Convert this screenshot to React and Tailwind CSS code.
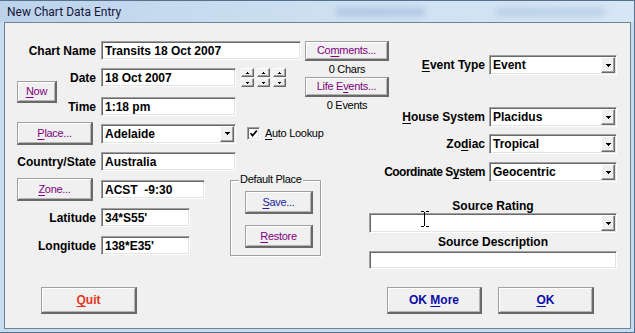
import React from 'react';

const BOLD = "font-['Liberation_Sans',Arial,sans-serif] font-bold text-[12px] leading-none whitespace-nowrap";
const REG = "font-['Liberation_Sans',Arial,sans-serif] text-[11px] tracking-[-0.3px] leading-none whitespace-nowrap";

const raised =
  'bg-[#f0f0f0] border border-t-[#a0a0a0] border-l-[#a0a0a0] border-r-2 border-b-2 border-r-[#696969] border-b-[#696969] shadow-[inset_1px_1px_0_#ffffff,inset_-1px_-1px_0_#b4b4b4]';
const raisedSmall =
  'bg-[#f0f0f0] border border-t-white border-l-white border-r-[#696969] border-b-[#696969] shadow-[inset_-1px_-1px_0_#a0a0a0]';
const sunken =
  'bg-white border border-t-[#a0a0a0] border-l-[#a0a0a0] border-r-white border-b-white shadow-[inset_1px_1px_0_#696969,inset_-1px_-1px_0_#e3e3e3]';

function U({ children }) {
  return <span className="underline underline-offset-[2px]">{children}</span>;
}

function Button({ className = '', color = 'text-[#800080]', bold, children }) {
  return (
    <div className={`${raised} ${className} flex items-center justify-center ${bold ? BOLD : REG} ${color}`}>
      <span>{children}</span>
    </div>
  );
}

function Field({ className = '', children }) {
  return (
    <div className={`${sunken} ${className} shrink-0 flex items-center pl-[3px] whitespace-pre ${BOLD} text-black`}>
      {children}
    </div>
  );
}

function Arrow() {
  return (
    <svg width="5" height="3" viewBox="0 0 5 3">
      <rect x="0" y="0" width="5" height="1" fill="#000" />
      <rect x="1" y="1" width="3" height="1" fill="#000" />
      <rect x="2" y="2" width="1" height="1" fill="#000" />
    </svg>
  );
}

function SpinArrow({ up }) {
  return (
    <svg width="3" height="2" viewBox="0 0 3 2" className={up ? 'rotate-180' : ''}>
      <rect x="0" y="0" width="3" height="1" fill="#000" />
      <rect x="1" y="1" width="1" height="1" fill="#000" />
    </svg>
  );
}

function Combo({ className = '', children }) {
  return (
    <div className={`${sunken} ${className} shrink-0 flex items-stretch p-[1px]`}>
      <div className={`flex-1 flex items-center pl-[2px] ${BOLD} text-black`}>{children}</div>
      <div className={`${raisedSmall} w-[14px] flex items-center justify-center`}>
        <Arrow />
      </div>
    </div>
  );
}

function Spins() {
  return (
    <div className="ml-[5px] flex gap-[3px]">
      {[0, 1, 2].map((i) => (
        <div key={i} className="flex flex-col gap-[1px]">
          <div className={`${raisedSmall} w-[13px] h-[9px] flex items-center justify-center`}>
            <SpinArrow up />
          </div>
          <div className={`${raisedSmall} w-[13px] h-[9px] flex items-center justify-center`}>
            <SpinArrow />
          </div>
        </div>
      ))}
    </div>
  );
}

function LabelRow({ label, className = '', children }) {
  return (
    <div className={`flex items-center h-[19px] ${className}`}>
      <div className={`w-[91px] text-right ${BOLD} text-black`}>{label}</div>
      <div className="ml-[5px]">{children}</div>
    </div>
  );
}

function ComboRow({ label, value, className = '', labelClass = '' }) {
  return (
    <div className={`flex items-center justify-end gap-[4px] ${className}`}>
      <div className={`${BOLD} ${labelClass} text-black`}>{label}</div>
      <Combo className="w-[128px] h-[20px]">{value}</Combo>
    </div>
  );
}

export default function App() {
  return (
    <div className="w-[635px] h-[333px] flex flex-col bg-[#c6dcf1] border-t border-r border-b border-[#55718c] overflow-hidden">
      {/* title bar */}
      <div className="h-[21px] flex items-center pl-[7px] bg-linear-to-r from-[#bcd3eb] via-[#cde0f2] to-[#d6e6f5]">
        <span className="font-['Roboto',sans-serif] text-[12px] text-[#15153a]">New Chart Data Entry</span>
        <div className="ml-[214px] w-[90px] h-[8px] rounded-full bg-[#a3bcdb] blur-[3px] opacity-70" />
        <div className="ml-[70px] w-[110px] h-[8px] rounded-full bg-[#a9c1de] blur-[3px] opacity-60" />
      </div>

      {/* client area */}
      <div className="flex-1 ml-[4px] mr-[3px] mb-[3px] border border-[#6f8193] bg-[#f0f0f0] flex flex-col">
        <div className="flex">
          {/* left column */}
          <div className="w-[384px] pt-[18px] flex flex-col">
            <div className="flex items-start">
              <div className="w-[296px] flex flex-col">
                <LabelRow label="Chart Name">
                  <Field className="w-[200px] h-[19px]">Transits 18 Oct 2007</Field>
                </LabelRow>
                <div className="flex items-center mt-[8px]">
                  <div className="w-[91px] flex items-center">
                    <Button className="ml-[12px] w-[40px] h-[22px]">
                      <U>N</U>ow
                    </Button>
                    <div className="flex-1 flex flex-col items-end gap-[10px]">
                      <div className={`h-[19px] flex items-center ${BOLD} text-black`}>Date</div>
                      <div className={`h-[19px] flex items-center ${BOLD} text-black`}>Time</div>
                    </div>
                  </div>
                  <div className="ml-[5px] flex flex-col gap-[10px]">
                    <div className="flex items-center">
                      <Field className="w-[135px] h-[19px]">18 Oct 2007</Field>
                      <Spins />
                    </div>
                    <Field className="w-[135px] h-[19px]">1:18 pm</Field>
                  </div>
                </div>
              </div>
              <div className="ml-[4px] w-[84px] flex flex-col">
                <Button className="h-[20px]">
                  Co<U>m</U>ments...
                </Button>
                <div className={`h-[16px] flex items-center justify-center ${REG} text-black`}>0 Chars</div>
                <Button className="h-[20px]">
                  Life E<U>v</U>ents...
                </Button>
                <div className={`h-[16px] flex items-center justify-center ${REG} text-black`}>0 Events</div>
              </div>
            </div>

            {/* place */}
            <div className="flex items-center mt-[6px] h-[23px]">
              <div className="w-[91px]">
                <Button className="ml-[12px] w-[76px] h-[23px]">
                  <U>P</U>lace...
                </Button>
              </div>
              <Combo className="ml-[5px] w-[135px] h-[20px]">Adelaide</Combo>
              <div className={`${sunken} ml-[11px] w-[13px] h-[13px] flex items-center justify-center`}>
                <svg width="9" height="9" viewBox="0 0 9 9">
                  <path d="M1.5 4.2 L3.6 6.6 L7.8 1.6" fill="none" stroke="#000" strokeWidth="1.7" />
                </svg>
              </div>
              <span className={`ml-[5px] ${REG} text-black`}>
                <U>A</U>uto Lookup
              </span>
            </div>

            <LabelRow label="Country/State" className="mt-[7px]">
              <Field className="w-[135px] h-[19px]">Australia</Field>
            </LabelRow>

            <div className="flex items-start mt-[7px]">
              <div className="w-[225px] flex flex-col">
                <div className="flex items-center h-[23px]">
                  <div className="w-[91px]">
                    <Button className="ml-[12px] w-[76px] h-[23px]">
                      <U>Z</U>one...
                    </Button>
                  </div>
                  <Field className="ml-[5px] w-[104px] h-[19px]">{'ACST  -9:30'}</Field>
                </div>
                <LabelRow label="Latitude" className="mt-[7px]">
                  <Field className="w-[89px] h-[19px]">34*S55'</Field>
                </LabelRow>
                <LabelRow label="Longitude" className="mt-[9px]">
                  <Field className="w-[89px] h-[19px]">138*E35'</Field>
                </LabelRow>
              </div>
              {/* default place group */}
              <div className="relative mt-[2px] w-[91px] border border-[#a0a0a0] shadow-[inset_1px_1px_0_#ffffff,1px_1px_0_#ffffff] pt-[10px] pl-[14px] pb-[7px] flex flex-col">
                <span className={`absolute left-[8px] top-[-7px] bg-[#f0f0f0] px-[1px] ${REG} leading-[13px] text-black`}>
                  Default Place
                </span>
                <Button className="w-[68px] h-[23px]" color="text-[#2424a2]">
                  <U>S</U>ave...
                </Button>
                <Button className="mt-[11px] w-[68px] h-[23px]">
                  <U>R</U>estore
                </Button>
              </div>
            </div>
          </div>

          {/* right column */}
          <div className="w-[240px] pr-[12px] flex flex-col">
            <ComboRow className="mt-[32px]" label={<><U>E</U>vent Type</>} value="Event" />
            <ComboRow className="mt-[32px]" label={<><U>H</U>ouse System</>} value="Placidus" />
            <ComboRow className="mt-[7px]" label={<>Zo<U>d</U>iac</>} value="Tropical" />
            <ComboRow
              className="mt-[8px]"
              labelClass="tracking-[-0.5px]"
              label={<>Coordinate S<U>y</U>stem</>}
              value="Geocentric"
            />
            <div className="-ml-[20px] w-[248px] mt-[17px] flex flex-col">
              <div className={`h-[14px] flex items-center justify-center ${BOLD} text-black`}>Source Rating</div>
              <div className="relative">
                <Combo className="w-[248px] h-[20px]" />
                <svg width="8" height="16" viewBox="0 0 8 16" className="absolute left-[52px] top-[-2px]">
                  <path d="M0 0.5h3M5 0.5h3M3.5 1v14M0 15.5h3M5 15.5h3" stroke="#000" strokeWidth="1" fill="none" />
                </svg>
              </div>
              <div className={`h-[18px] flex items-center justify-center ${BOLD} text-black`}>Source Description</div>
              <Field className="w-[248px] h-[18px]" />
            </div>
          </div>
        </div>

        {/* bottom buttons */}
        <div className="flex justify-between px-[36px] mt-[18px]">
          <Button bold className="w-[96px] h-[27px]" color="text-[#e3361c]">
            <U>Q</U>uit
          </Button>
          <div className="flex gap-[16px]">
            <Button bold className="w-[95px] h-[27px]" color="text-[#0c0ca8]">
              OK <U>M</U>ore
            </Button>
            <Button bold className="w-[96px] h-[27px]" color="text-[#0c0ca8]">
              <U>O</U>K
            </Button>
          </div>
        </div>
      </div>
    </div>
  );
}
